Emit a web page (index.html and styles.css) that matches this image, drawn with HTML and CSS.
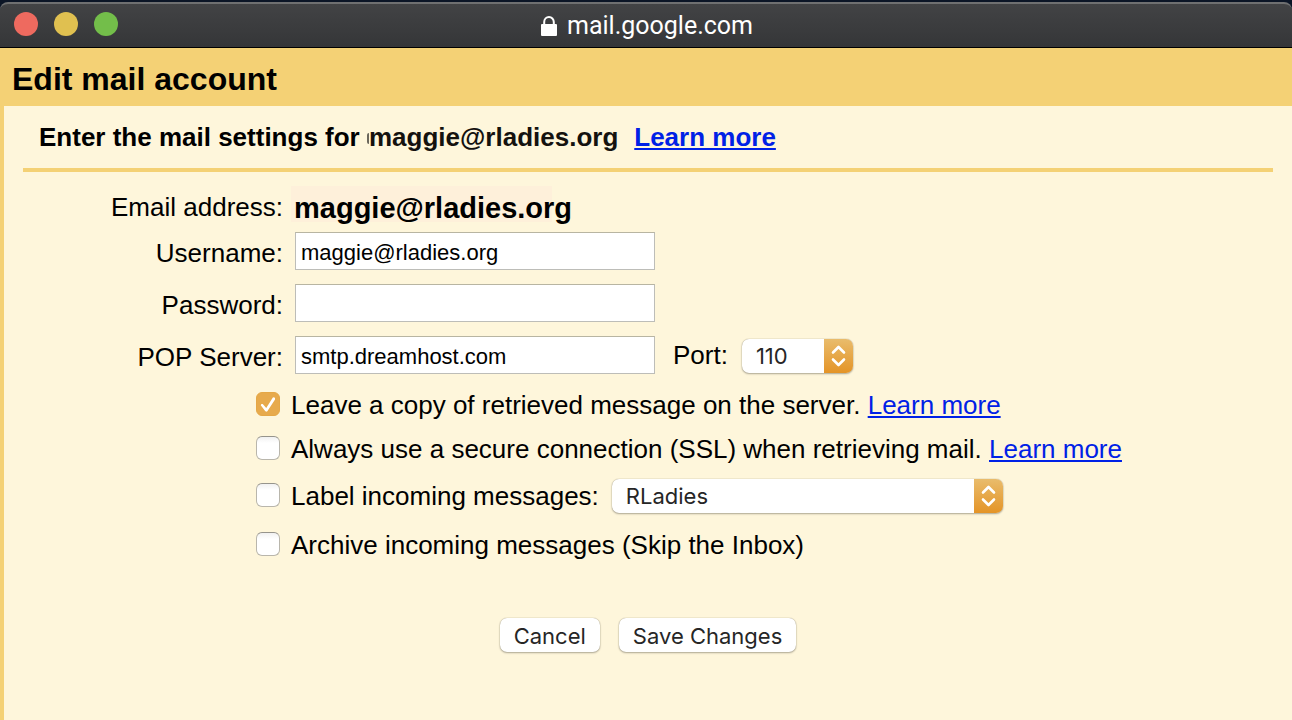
FILE: index.html
```html
<!DOCTYPE html>
<html lang="en">
<head>
<meta charset="utf-8">
<title>Edit mail account</title>
<link rel="stylesheet" href="styles.css">
</head>
<body>
<div class="window">
  <header class="titlebar">
    <div class="lights">
      <button class="light light-close" type="button" aria-label="Close"></button>
      <button class="light light-min" type="button" aria-label="Minimize"></button>
      <button class="light light-zoom" type="button" aria-label="Zoom"></button>
    </div>
    <div class="address">
      <svg class="lock" width="16" height="20" viewBox="0 0 16 20" aria-hidden="true">
        <path d="M3.2 9V6a4.8 5 0 0 1 9.6 0v3" fill="none" stroke="#fff" stroke-width="2"/>
        <rect x="0" y="8" width="16" height="12" rx="1" fill="#fff"/>
      </svg>
      <span>mail.google.com</span>
    </div>
  </header>
  <h1 class="page-title">Edit mail account</h1>
  <main class="panel">
    <h2 class="intro">Enter the mail settings for <span class="account">maggie@rladies.org</span><a class="link intro-link" href="#">Learn more</a></h2>
    <form class="form">
      <div class="fields">
        <div class="row row-email">
          <span class="label">Email address:</span>
          <span class="email">maggie@rladies.org</span>
        </div>
        <div class="row">
          <label class="label label-input" for="user">Username:</label>
          <input class="text" id="user" type="text" value="maggie@rladies.org">
        </div>
        <div class="row">
          <label class="label label-input" for="pass">Password:</label>
          <input class="text" id="pass" type="password">
        </div>
        <div class="row">
          <label class="label label-input" for="server">POP Server:</label>
          <input class="text" id="server" type="text" value="smtp.dreamhost.com">
          <label class="port" for="port">Port:</label>
          <span class="picker picker-port">
            <select class="select" id="port"><option>110</option><option>995</option></select>
            <svg class="arrows" viewBox="0 0 29 34" aria-hidden="true"><path d="M9 13.5l5.500-5.500 5.500 5.500M9 20.500l5.500 5.500 5.500-5.500"/></svg>
          </span>
        </div>
      </div>
      <div class="options">
        <div class="option">
          <input class="check" id="leave" type="checkbox" checked>
          <span><label for="leave">Leave a copy of retrieved message on the server.</label> <a class="link" href="#">Learn more</a></span>
        </div>
        <div class="option">
          <input class="check" id="ssl" type="checkbox">
          <span><label for="ssl">Always use a secure connection (SSL) when retrieving mail.</label> <a class="link" href="#">Learn more</a></span>
        </div>
        <div class="option option-tall">
          <input class="check" id="tag" type="checkbox">
          <label for="tag">Label incoming messages:</label>
          <span class="picker picker-label">
            <select class="select" aria-label="Label"><option>RLadies</option></select>
            <svg class="arrows" viewBox="0 0 29 34" aria-hidden="true"><path d="M9 13.5l5.500-5.500 5.500 5.500M9 20.500l5.500 5.500 5.500-5.500"/></svg>
          </span>
        </div>
        <div class="option option-tall">
          <input class="check" id="archive" type="checkbox">
          <label for="archive">Archive incoming messages (Skip the Inbox)</label>
        </div>
      </div>
      <div class="actions">
        <button class="button" type="button">Cancel</button>
        <button class="button" type="submit">Save Changes</button>
      </div>
    </form>
  </main>
</div>
</body>
</html>
```
FILE: styles.css
```css
* { box-sizing: border-box; }

body {
  margin: 0;
  background: #fef6db;
  color: #000;
  font: 26px/30px "Liberation Sans", Arial, sans-serif;
}

.window {
  display: flex;
  flex-direction: column;
  min-height: 100vh;
  background: #0b1526;
}

/* Window chrome */
.titlebar {
  display: grid;
  grid-template-columns: 1fr auto 1fr;
  align-items: center;
  height: 46px;
  margin-top: 2px;
  padding: 0 14px;
  border-top: 2px solid #6f7071;
  border-bottom: 1px solid #000;
  border-radius: 8px 8px 0 0;
  background: linear-gradient(#424345, #353638);
}

.lights { display: flex; gap: 16px; padding-bottom: 4px; }

.light {
  width: 24px;
  height: 24px;
  padding: 0;
  border: 0;
  border-radius: 50%;
}
.light-close { background: #ee6a5f; }
.light-min { background: #e0c050; }
.light-zoom { background: #73be4a; }

.address {
  display: flex;
  align-items: center;
  gap: 10px;
  padding-left: 2px;
  color: #fff;
  font: 25px/30px Roboto, sans-serif;
}

/* Page heading */
.page-title {
  margin: 0;
  padding: 13px 12px 9px;
  background: #f4d175;
  font-size: 32px;
  line-height: 36px;
}

.panel {
  flex: 1;
  padding: 0 19px 24px;
  border-left: 4px solid #f4d175;
  background: #fef6db;
}

.intro {
  margin: 0;
  padding: 16px;
  border-bottom: 4px solid #f4d175;
  font-size: 26px;
  line-height: 30px;
}
.account { position: relative; margin-left: 2px; color: #14120f; }
.account::before {
  content: "";
  position: absolute;
  left: -2px;
  top: 11px;
  width: 2px;
  height: 11px;
  border-radius: 2px 0 0 2px;
  background: #6b675c;
}
.intro-link { margin-left: 16px; }

.link {
  color: #0021e6;
  text-decoration-thickness: 2px;
  text-underline-offset: 2px;
}

/* Form rows */
.fields {
  display: flex;
  flex-direction: column;
  gap: 14px;
  padding-top: 14px;
}
.row { display: flex; align-items: center; }
.row-email { height: 32px; align-items: flex-start; }
.label {
  flex: none;
  width: 260px;
  margin-right: 12px;
  text-align: right;
}
.row-email .label { padding-top: 6px; margin-right: 8px; }
.label-input { padding-top: 4px; }

.email {
  width: 261px;
  height: 36px;
  padding: 4px 0 0 3px;
  background: #fef0da;
  font-weight: bold;
  font-size: 29px;
  line-height: 36px;
}

.text {
  width: 360px;
  height: 38px;
  padding: 4px 5px 0;
  border: 1px solid #bdbdb8;
  border-top-color: #b8b5a2;
  border-radius: 0;
  background: #fff;
  color: #000;
  font: 22px/30px "Liberation Sans", Arial, sans-serif;
}

.port { margin: 0 14px 0 18px; }

.picker {
  position: relative;
  display: block;
  height: 34px;
  border-radius: 7px;
  background: #fff;
  box-shadow: 0 0 1px rgba(110, 100, 70, 0.7), 0 1px 2px rgba(0, 0, 0, 0.3);
}
.picker-port { width: 111px; margin-top: 2px; }
.picker-label { width: 391px; margin-left: 2px; }

.select {
  appearance: none;
  display: block;
  width: 100%;
  height: 34px;
  padding: 0 32px 0 14px;
  border: 0;
  border-radius: 7px;
  background: transparent;
  color: #262626;
  font: 22px/30px Inter, sans-serif;
}

.arrows {
  position: absolute;
  top: 0;
  right: 0;
  width: 29px;
  height: 34px;
  border-radius: 0 7px 7px 0;
  background: linear-gradient(#e9bc6c, #e49427);
  fill: none;
  stroke: #fff;
  stroke-width: 2.600;
  stroke-linecap: round;
  stroke-linejoin: round;
  pointer-events: none;
}

/* Tick-box options */
.options { padding: 9px 0 0 233px; }
.option {
  display: flex;
  align-items: center;
  gap: 11px;
  height: 44px;
}
.option-tall { height: 49px; }

.check {
  appearance: none;
  display: grid;
  place-items: center;
  flex: none;
  width: 24px;
  height: 24px;
  margin: 0 0 2px;
  border: 1px solid #b9b6ac;
  border-top-color: #96948c;
  border-radius: 6px;
  background: linear-gradient(#f1f1f1, #fff 6px);
}
.check:checked { border-color: #e5a746; background: #e7aa4c; }
.check:checked::before {
  content: "";
  width: 22px;
  height: 22px;
  background: #fff;
  clip-path: polygon(17% 56%, 20% 50%, 26% 50%, 42% 68%, 72% 21%, 78% 19%, 82% 24%, 82% 29%, 47% 83%, 42% 85%, 37% 82%);
}

/* Buttons */
.actions {
  display: flex;
  justify-content: center;
  gap: 19px;
  padding-top: 49px;
}
.button {
  height: 34px;
  padding: 2px 14px 0;
  border: 0;
  border-radius: 7px;
  background: #fff;
  box-shadow: 0 0 1px rgba(110, 100, 70, 0.7), 0 1px 2px rgba(0, 0, 0, 0.3);
  color: #262626;
  font: 22px/30px Inter, sans-serif;
}
```
